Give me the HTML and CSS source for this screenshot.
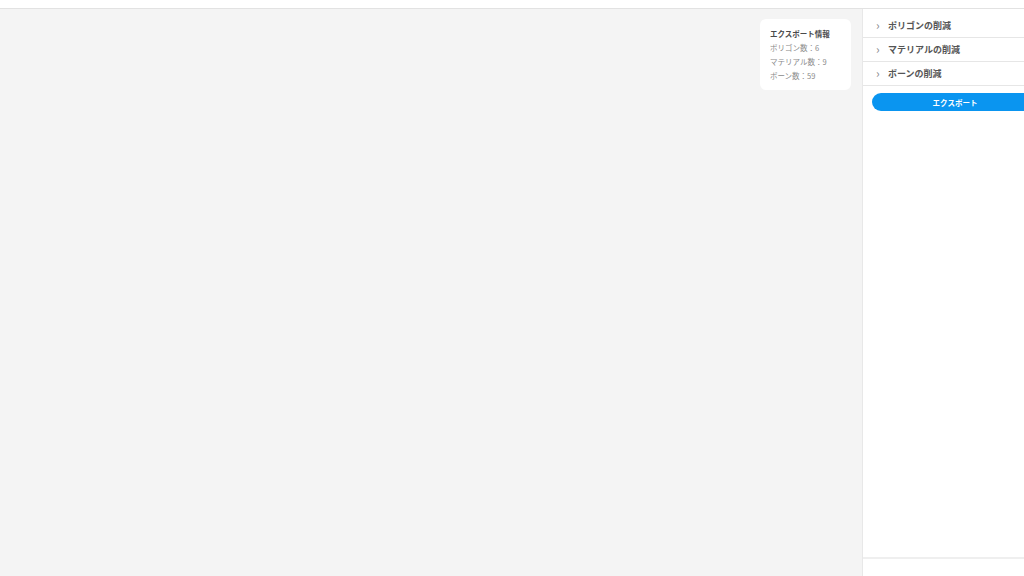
FILE: index.html
```html
<!DOCTYPE html>
<html lang="ja">
<head>
  <meta charset="UTF-8">
  <title>エクスポート</title>
  <link rel="stylesheet" href="styles.css">
</head>
<body>
  <div class="cabecera"></div>

  <div class="principal">
    <div class="visor">
      <div class="info">
        <div class="info-titulo">エクスポート情報</div>
        <div>ポリゴン数：6</div>
        <div>マテリアル数：9</div>
        <div>ボーン数：59</div>
      </div>
    </div>

    <div class="panel">
      <div class="opciones">
        <div class="opcion"><span class="flecha">›</span>ポリゴンの削減</div>
        <div class="opcion"><span class="flecha">›</span>マテリアルの削減</div>
        <div class="opcion"><span class="flecha">›</span>ボーンの削減</div>
        <button class="exportar">エクスポート</button>
      </div>
      <div class="pie"></div>
    </div>
  </div>
</body>
</html>
```

FILE: styles.css
```css
html, body {
  margin: 0;
  height: 100%;
  overflow: hidden;
}

body {
  font-family: "Noto Sans CJK JP", "Noto Sans", sans-serif;
  background-color: #ffffff;
  color: #444;
  display: flex;
  flex-direction: column;
}

.cabecera {
  height: 8px;
  border-bottom: 1px solid #e2e2e2;
  flex: none;
}

.principal {
  flex: 1;
  display: flex;
  min-height: 0;
}

.visor {
  width: 862px;
  flex: none;
  background-color: #f4f4f4;
  position: relative;
}

.info {
  position: absolute;
  top: 10px;
  right: 11px;
  width: 71px;
  padding: 8px 10px 7px;
  background-color: #ffffff;
  border-radius: 6px;
  font-size: 7.5px;
  line-height: 14px;
  color: #8a8a8a;
}

.info-titulo {
  font-weight: bold;
  color: #4a4a4a;
}

.panel {
  width: 184px;
  flex: none;
  border-left: 1px solid #e8e8e8;
  display: flex;
  flex-direction: column;
}

.opciones {
  flex: 1;
  padding-top: 5px;
}

.opcion {
  height: 23px;
  border-bottom: 1px solid #e6e6e6;
  display: flex;
  align-items: center;
  padding-left: 13px;
  font-size: 9px;
  font-weight: bold;
  color: #555;
}

.flecha {
  width: 12px;
  font-size: 12px;
  font-weight: normal;
  color: #888;
  line-height: 1;
  margin-top: -2px;
}

.exportar {
  display: block;
  margin: 7px 0 0 9px;
  width: 166px;
  height: 18px;
  border: none;
  border-radius: 9px;
  background-color: #0a95f0;
  color: #ffffff;
  font-family: inherit;
  font-size: 7.5px;
  font-weight: bold;
  padding: 0;
}

.pie {
  height: 17px;
  border-top: 2px solid #efefef;
  flex: none;
}
```
